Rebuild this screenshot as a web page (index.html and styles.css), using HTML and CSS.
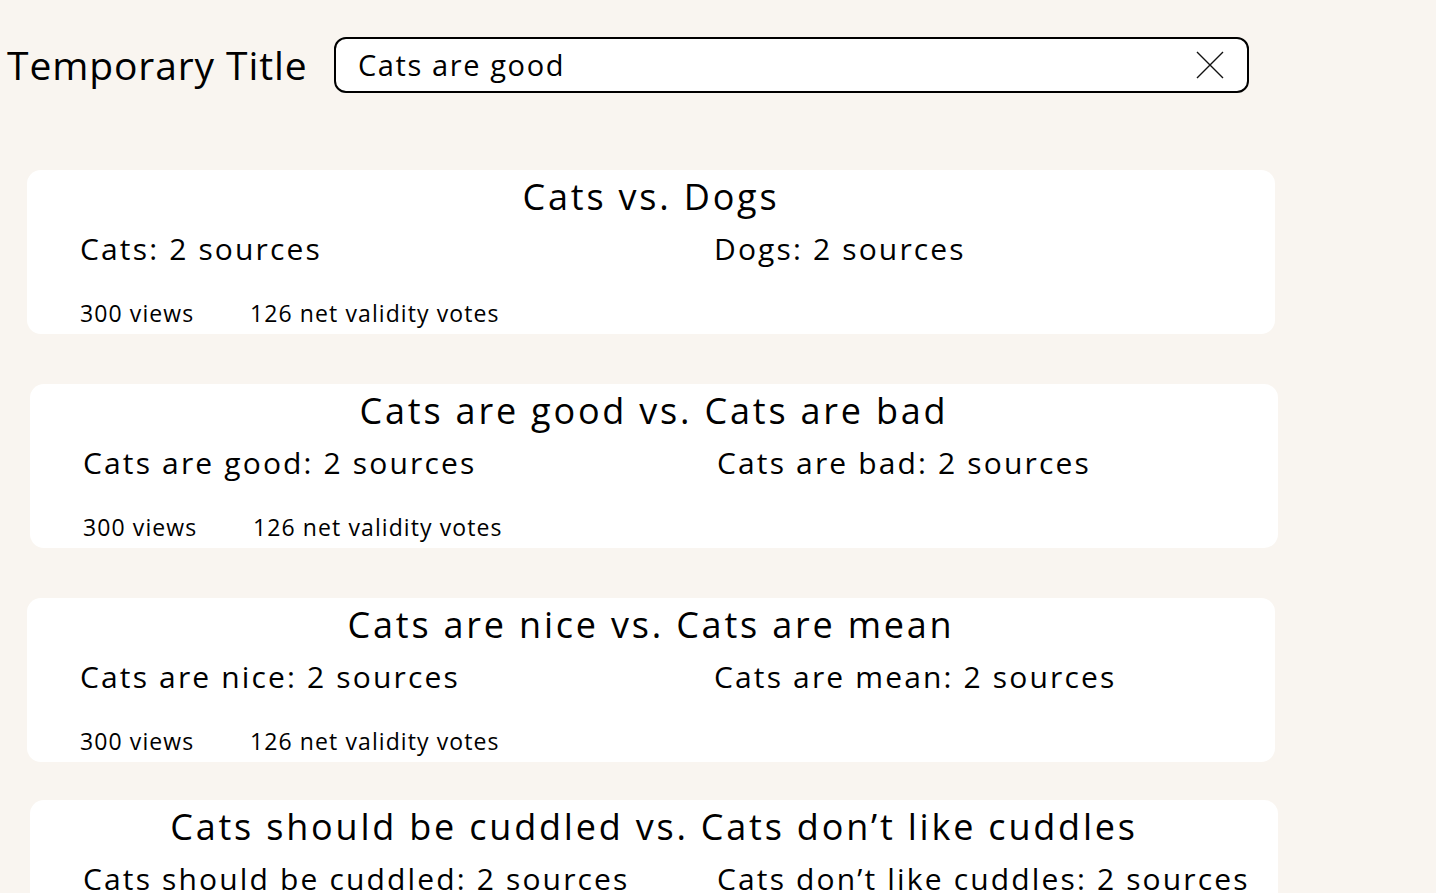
FILE: index.html
```html
<!DOCTYPE html>
<html lang="en">
<head>
<meta charset="utf-8">
<title>Temporary Title</title>
<link rel="stylesheet" href="styles.css">
</head>
<body>
<header class="topbar">
  <h1 class="app-title">Temporary Title</h1>
  <div class="search">
    <span class="search-text">Cats are good</span>
    <svg class="search-clear" width="30" height="30" viewBox="0 0 30 30" aria-hidden="true">
      <path d="M2 2 L28 28 M28 2 L2 28" stroke="#111" stroke-width="1.4" fill="none"/>
    </svg>
  </div>
</header>
<main class="list">
  <section class="card">
    <h2 class="card-title">Cats vs. Dogs</h2>
    <div class="sides">
      <p class="side">Cats: 2 sources</p>
      <p class="side">Dogs: 2 sources</p>
    </div>
    <div class="stats">
      <span class="views">300 views</span>
      <span class="votes">126 net validity votes</span>
    </div>
  </section>
  <section class="card card-shift">
    <h2 class="card-title">Cats are good vs. Cats are bad</h2>
    <div class="sides">
      <p class="side">Cats are good: 2 sources</p>
      <p class="side">Cats are bad: 2 sources</p>
    </div>
    <div class="stats">
      <span class="views">300 views</span>
      <span class="votes">126 net validity votes</span>
    </div>
  </section>
  <section class="card card-tight">
    <h2 class="card-title">Cats are nice vs. Cats are mean</h2>
    <div class="sides">
      <p class="side">Cats are nice: 2 sources</p>
      <p class="side">Cats are mean: 2 sources</p>
    </div>
    <div class="stats">
      <span class="views">300 views</span>
      <span class="votes">126 net validity votes</span>
    </div>
  </section>
  <section class="card card-shift">
    <h2 class="card-title">Cats should be cuddled vs. Cats don’t like cuddles</h2>
    <div class="sides">
      <p class="side">Cats should be cuddled: 2 sources</p>
      <p class="side">Cats don’t like cuddles: 2 sources</p>
    </div>
    <div class="stats">
      <span class="views">300 views</span>
      <span class="votes">126 net validity votes</span>
    </div>
  </section>
</main>
</body>
</html>
```

FILE: styles.css
```css
html, body {
  margin: 0;
  padding: 0;
}
body {
  background: #f9f5f0;
  color: #000;
  font-family: "Open Sans", "Noto Sans", sans-serif;
  overflow: hidden;
  height: 893px;
}
.topbar {
  display: flex;
  align-items: center;
  padding: 37px 0 0 7px;
  height: 55px;
}
.app-title {
  margin: 0;
  font-size: 39px;
  font-weight: 400;
  line-height: 55px;
  width: 327px;
  letter-spacing: 0.9px;
}
.search {
  box-sizing: border-box;
  width: 915px;
  height: 56px;
  border: 2px solid #000;
  border-radius: 12px;
  background: #fff;
  display: flex;
  align-items: center;
  justify-content: space-between;
  padding: 0 22px 0 22px;
}
.search-text {
  font-size: 29px;
  letter-spacing: 1.6px;
}
.search-clear {
  display: block;
}
.list {
  padding: 78px 0 0 27px;
  display: flex;
  flex-direction: column;
  align-items: flex-start;
  gap: 50px;
}
.card {
  box-sizing: border-box;
  width: 1248px;
  height: 164px;
  background: #fff;
  border-radius: 14px;
  padding: 0 0 0 53px;
}
.card-shift {
  margin-left: 3px;
}
.card-tight {
  margin-bottom: -12px;
}
.card-title {
  margin: 0 0 0 -53px;
  font-size: 36px;
  font-weight: 400;
  text-align: center;
  line-height: 50px;
  padding-top: 2px;
  letter-spacing: 2.8px;
}
.sides {
  display: grid;
  grid-template-columns: 634px 1fr;
  margin-top: 8px;
}
.side {
  margin: 0;
  font-size: 30px;
  line-height: 38px;
  letter-spacing: 2.15px;
  white-space: nowrap;
}
.stats {
  display: flex;
  margin-top: 30px;
  font-size: 23px;
  line-height: 30px;
  letter-spacing: 1.1px;
}
.views {
  width: 170px;
}
```
